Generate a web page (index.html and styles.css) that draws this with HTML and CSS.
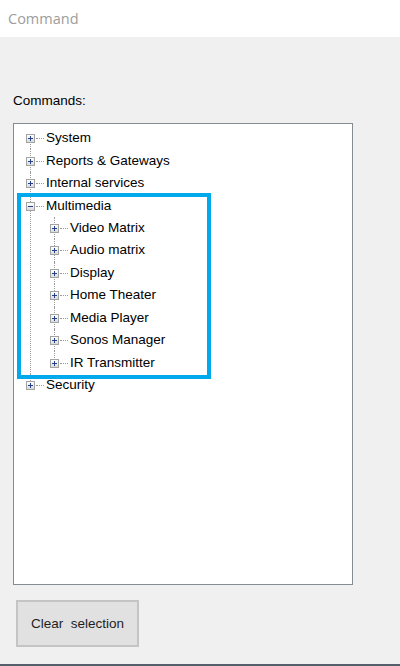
FILE: index.html
```html
<!DOCTYPE html>
<html lang="en">

<head>
    <meta charset="UTF-8">
    <meta name="viewport" content="width=device-width, initial-scale=1.0">
    <title>Command</title>
    <link rel="stylesheet" href="styles.css">
</head>

<body>
    <div class="titlebar">Command</div>

    <div class="panel">
        <div class="caption">Commands:</div>

        <div class="tree">
            <ul class="nodes root">
                <li><div class="row"><span class="exp"></span><span class="dash"></span><span class="label">System</span></div></li>
                <li><div class="row"><span class="exp"></span><span class="dash"></span><span class="label">Reports &amp; Gateways</span></div></li>
                <li><div class="row"><span class="exp"></span><span class="dash"></span><span class="label">Internal services</span></div></li>
                <li>
                    <div class="row"><span class="exp open"></span><span class="dash"></span><span class="label">Multimedia</span></div>
                    <ul class="nodes">
                        <li><div class="row"><span class="exp"></span><span class="dash"></span><span class="label">Video Matrix</span></div></li>
                        <li><div class="row"><span class="exp"></span><span class="dash"></span><span class="label">Audio matrix</span></div></li>
                        <li><div class="row"><span class="exp"></span><span class="dash"></span><span class="label">Display</span></div></li>
                        <li><div class="row"><span class="exp"></span><span class="dash"></span><span class="label">Home Theater</span></div></li>
                        <li><div class="row"><span class="exp"></span><span class="dash"></span><span class="label">Media Player</span></div></li>
                        <li><div class="row"><span class="exp"></span><span class="dash"></span><span class="label">Sonos Manager</span></div></li>
                        <li><div class="row"><span class="exp"></span><span class="dash"></span><span class="label">IR Transmitter</span></div></li>
                    </ul>
                </li>
                <li><div class="row"><span class="exp"></span><span class="dash"></span><span class="label">Security</span></div></li>
            </ul>

            <div class="highlight"></div>
        </div>

        <button class="btn">Clear&nbsp; selection</button>
    </div>
</body>

</html>
```

FILE: styles.css
```css
* {
    margin: 0;
    padding: 0;
    box-sizing: border-box;
}

li {
    list-style: none;
}

body {
    width: 400px;
    height: 666px;
    overflow: hidden;
    font-family: "Liberation Sans", Arial, sans-serif;
    font-size: 13.5px;
    color: #000;
    background-color: #f0f0f0;
}

.titlebar {
    height: 37px;
    padding-left: 8px;
    line-height: 37px;
    background-color: #fff;
    font-family: "Open Sans", "Noto Sans", sans-serif;
    font-size: 14.5px;
    color: #9d9d9d;
}

.panel {
    height: 629px;
    padding: 56px 0 0 13px;
    border-bottom: 2px solid #56606c;
}

.caption {
    height: 16px;
    line-height: 16px;
}

.tree {
    position: relative;
    width: 340px;
    height: 462px;
    margin-top: 14px;
    padding: 3px 0 0 12px;
    background-color: #fff;
    border: 1px solid #868a91;
}

.nodes li {
    position: relative;
}

/* vertical dotted guide */
.nodes li::before {
    content: "";
    position: absolute;
    left: 4px;
    top: 0;
    bottom: 0;
    border-left: 1px dotted #9a9a9a;
}

.root > li:first-child::before {
    top: 11px;
}

.nodes > li:last-child::before {
    bottom: auto;
    height: 11px;
}

.nodes .nodes {
    padding-left: 24px;
}

.row {
    display: flex;
    align-items: center;
    height: 22.45px;
}

.exp {
    position: relative;
    flex: none;
    width: 9px;
    height: 9px;
    margin-top: 1px;
    border: 1px solid #a3a3a3;
    background: linear-gradient(#ffffff, #dadada);
}

.exp::before {
    content: "";
    position: absolute;
    left: 1px;
    top: 3px;
    width: 5px;
    height: 1px;
    background-color: #24408a;
}

.exp::after {
    content: "";
    position: absolute;
    left: 3px;
    top: 1px;
    width: 1px;
    height: 5px;
    background-color: #24408a;
}

.exp.open::after {
    display: none;
}

.dash {
    flex: none;
    width: 8px;
    margin: 1px 2px 0 1px;
    border-top: 1px dotted #9a9a9a;
}

.label {
    white-space: nowrap;
    line-height: 16px;
}

.highlight {
    position: absolute;
    left: 3px;
    top: 69px;
    width: 194px;
    height: 186px;
    border: 4px solid #00a9ec;
}

.btn {
    display: block;
    width: 123px;
    height: 47px;
    margin: 15px 0 0 3px;
    font-family: "Liberation Sans", Arial, sans-serif;
    font-size: 13.5px;
    color: #1e1e1e;
    background-color: #e1e1e1;
    border: 2px solid #c4c4c4;
}
```
